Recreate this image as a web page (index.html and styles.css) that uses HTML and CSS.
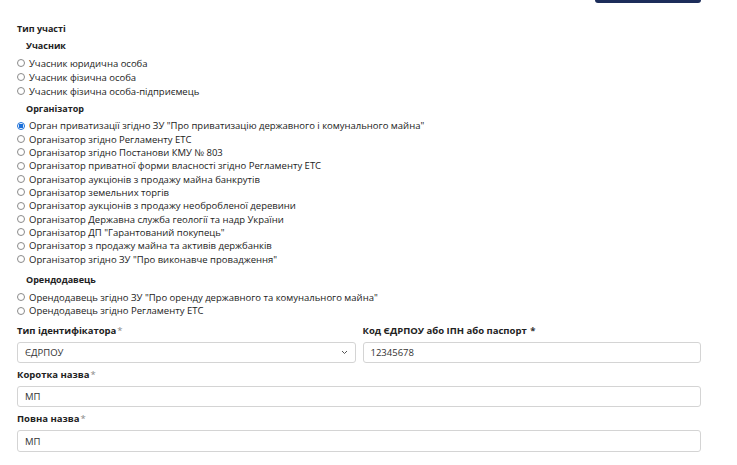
FILE: index.html
```html
<!DOCTYPE html>
<html lang="uk">
<head>
<meta charset="utf-8">
<link rel="stylesheet" href="styles.css">
</head>
<body>
<div class="page">
  <div class="topbar"><div class="topbtn"></div></div>
  <div class="section-title">Тип участі</div>

  <div class="group-title">Учасник</div>
  <div class="radios first">
    <label class="radio"><input type="radio" name="t"><span>Учасник юридична особа</span></label>
    <label class="radio"><input type="radio" name="t"><span>Учасник фізична особа</span></label>
    <label class="radio"><input type="radio" name="t"><span>Учасник фізична особа-підприємець</span></label>
  </div>

  <div class="group-title">Організатор</div>
  <div class="radios">
    <label class="radio"><input type="radio" name="t" checked><span>Орган приватизації згідно ЗУ "Про приватизацію державного і комунального майна"</span></label>
    <label class="radio"><input type="radio" name="t"><span>Організатор згідно Регламенту ЕТС</span></label>
    <label class="radio"><input type="radio" name="t"><span>Організатор згідно Постанови КМУ № 803</span></label>
    <label class="radio"><input type="radio" name="t"><span>Організатор приватної форми власності згідно Регламенту ЕТС</span></label>
    <label class="radio"><input type="radio" name="t"><span>Організатор аукціонів з продажу майна банкрутів</span></label>
    <label class="radio"><input type="radio" name="t"><span>Організатор земельних торгів</span></label>
    <label class="radio"><input type="radio" name="t"><span>Організатор аукціонів з продажу необробленої деревини</span></label>
    <label class="radio"><input type="radio" name="t"><span>Організатор Державна служба геології та надр України</span></label>
    <label class="radio"><input type="radio" name="t"><span>Організатор ДП "Гарантований покупець"</span></label>
    <label class="radio"><input type="radio" name="t"><span>Організатор з продажу майна та активів держбанків</span></label>
    <label class="radio"><input type="radio" name="t"><span>Організатор згідно ЗУ "Про виконавче провадження"</span></label>
  </div>

  <div class="group-title spaced">Орендодавець</div>
  <div class="radios">
    <label class="radio"><input type="radio" name="t"><span>Орендодавець згідно ЗУ "Про оренду державного та комунального майна"</span></label>
    <label class="radio"><input type="radio" name="t"><span>Орендодавець згідно Регламенту ЕТС</span></label>
  </div>

  <div class="row">
    <div class="field">
      <div class="label">Тип ідентифікатора<span class="req">*</span></div>
      <div class="control select"><span>ЄДРПОУ</span>
        <svg class="chev" width="7" height="5" viewBox="0 0 7 5"><path d="M1 1 L3.5 3.5 L6 1" fill="none" stroke="#555" stroke-width="1"/></svg>
      </div>
    </div>
    <div class="field">
      <div class="label">Код ЄДРПОУ або ІПН або паспорт <span class="req dark">*</span></div>
      <div class="control"><span>12345678</span></div>
    </div>
  </div>

  <div class="field">
    <div class="label">Коротка назва<span class="req">*</span></div>
    <div class="control"><span>МП</span></div>
  </div>
  <div class="field">
    <div class="label">Повна назва<span class="req">*</span></div>
    <div class="control tall"><span>МП</span></div>
  </div>
</div>
</body>
</html>
```

FILE: styles.css
```css
html, body {
  margin: 0;
  padding: 0;
  background: #fff;
}
body {
  font-family: "Open Sans", "Noto Sans", sans-serif;
  font-size: 9.5px;
  color: #222;
}
.page {
  padding: 0 36px 0 17px;
}
.topbar {
  display: flex;
  justify-content: flex-end;
  height: 3px;
}
.topbtn {
  width: 106px;
  height: 3px;
  background: #1c2d5a;
  border-radius: 0 0 3px 3px;
}
.section-title {
  font-weight: 700;
  font-size: 9px;
  line-height: 13px;
  margin-top: 19px;
}
.group-title {
  font-weight: 700;
  font-size: 9px;
  line-height: 13px;
  padding-left: 9px;
  margin-top: 4px;
  margin-bottom: 4px;
}
.group-title.spaced {
  margin-top: 7px;
  margin-bottom: 5px;
}
.radios {
  display: flex;
  flex-direction: column;
}
.radios.first .radio {
  height: 14px;
}
.radio {
  display: flex;
  align-items: center;
  height: 13.35px;
  color: #222;
  white-space: nowrap;
}
.radio input {
  appearance: none;
  -webkit-appearance: none;
  margin: 0 4px 0 0;
  width: 8px;
  height: 8px;
  border: 1px solid #8a8a8a;
  border-radius: 50%;
  box-sizing: border-box;
  flex: none;
}
.radio input:checked {
  border-color: #1a6fd9;
  background: radial-gradient(circle, #1a6fd9 0 2.2px, #fff 2.5px);
}
.row {
  display: flex;
  gap: 7px;
  margin-top: 2px;
}
.row .field {
  flex: 1;
}
.field {
  margin-top: 5px;
}
.label {
  font-weight: 700;
  font-size: 9.5px;
  line-height: 13px;
  margin-bottom: 5px;
}
.req {
  font-weight: 400;
  color: #888;
  margin-left: 1px;
}
.req.dark {
  font-weight: 700;
  color: #333;
}
.control {
  height: 21px;
  box-sizing: border-box;
  border: 1px solid #d4d4d4;
  border-radius: 3px;
  display: flex;
  align-items: center;
  padding: 0 7px;
  color: #333;
}
.control.tall {
  height: 22px;
}
.select {
  justify-content: space-between;
}
```
